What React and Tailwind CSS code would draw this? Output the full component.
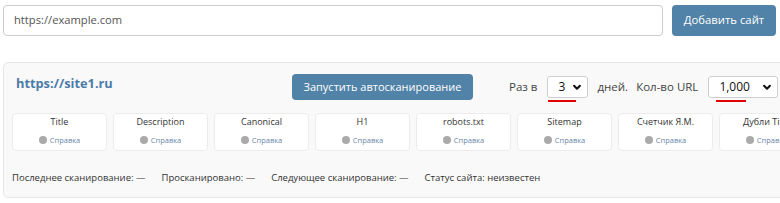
import React from 'react';

const checks = ['Title', 'Description', 'Canonical', 'H1', 'robots.txt', 'Sitemap', 'Счетчик Я.М.', 'Дубли Title'];

const Chevron = () => (
    <svg width="10" height="10" viewBox="0 0 24 24" fill="none" stroke="#111" strokeWidth="5" strokeLinecap="round" strokeLinejoin="round">
        <path d="M5 9l7 7 7-7" />
    </svg>
);

// red marks drawn under the selects in the screenshot
const FakeSelect = ({ value, className, markClass }) => (
    <div className={`relative flex items-center justify-between h-[22px] bg-white border border-[#cfcfcf] rounded-[3px] pl-[10px] pr-[5px] text-[12px] text-[#111] ${className}`}>
        <span>{value}</span>
        <Chevron />
        <span className={`absolute top-[23px] h-[2px] bg-[#e00000] ${markClass}`} />
    </div>
);

const CheckCard = ({ name }) => (
    <div className="w-[95px] shrink-0 h-[38px] bg-white border border-[#ececec] rounded-[4px] flex flex-col items-center pt-[2px]">
        <div className="text-[9px] leading-[12px] text-[#333]">{name}</div>
        <div className="flex items-center gap-[3px] mt-[7px]">
            <span className="w-[8px] h-[8px] rounded-full bg-[#aaaaaa]" />
            <span className="text-[7.5px] leading-[10px] text-[#6a88ab]">Справка</span>
        </div>
    </div>
);

export default function App() {
    return (
        <div className="w-[780px] h-[203px] overflow-hidden bg-white pl-[3px] pt-[5px]" style={{ fontFamily: '"Open Sans", "Liberation Sans", sans-serif' }}>
            <div className="flex items-center">
                <div className="w-[660px] h-[31px] border border-[#cccccc] rounded-[4px] flex items-center px-[10px] text-[11.2px] text-[#555]">
                    https://example.com
                </div>
                <button className="ml-[9px] w-[104px] h-[31px] rounded-[4px] bg-[#5182a7] text-white text-[11.3px]">
                    Добавить сайт
                </button>
            </div>

            <div className="mt-[26px] w-[820px] h-[136px] border border-[#e6e6e6] rounded-[5px] bg-[#f9f9f9] pt-[11px] pl-[8px]">
                <div className="flex items-center h-[26px]">
                    <div className="w-[280px] pl-[4px] text-[12.8px] font-bold text-[#4b7ca8] -mt-[6px]">https://site1.ru</div>
                    <button className="w-[181px] h-[26px] rounded-[4px] bg-[#5182a7] text-white text-[11px]">
                        Запустить автосканирование
                    </button>
                    <span className="ml-[36px] text-[11.5px] text-[#444]">Раз в</span>
                    <FakeSelect value="3" className="ml-[10px] w-[41px]" markClass="left-0 w-[28px]" />
                    <span className="ml-[9px] text-[11.5px] text-[#444]">дней.</span>
                    <span className="ml-[8px] text-[11.5px] text-[#444]">Кол-во URL</span>
                    <FakeSelect value="1,000" className="ml-[10px] w-[70px]" markClass="left-[7px] w-[30px]" />
                </div>

                <div className="flex gap-[6px] mt-[13px]">
                    {checks.map(c => (
                        <CheckCard key={c} name={c} />
                    ))}
                </div>

                <div className="flex mt-[20px] text-[9.5px] leading-[14px] text-[#333]">
                    <span>Последнее сканирование: —</span>
                    <span className="ml-[16px]">Просканировано: —</span>
                    <span className="ml-[16px]">Следующее сканирование: —</span>
                    <span className="ml-[16px]">Статус сайта: неизвестен</span>
                </div>
            </div>
        </div>
    );
}
